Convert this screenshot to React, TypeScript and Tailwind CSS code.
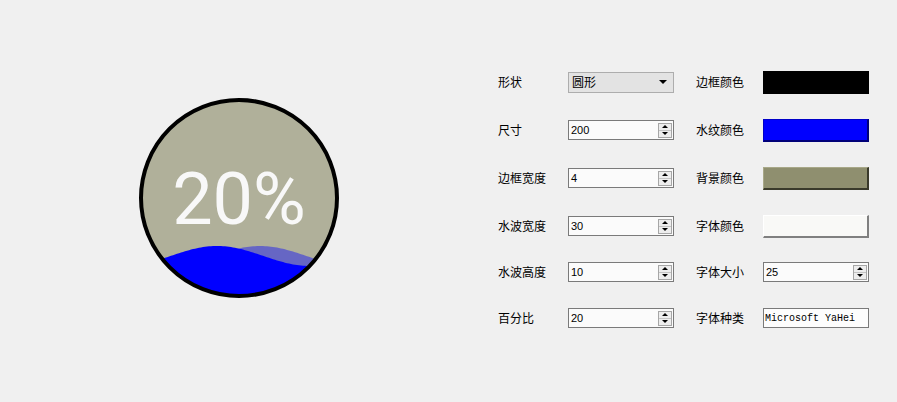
import React from 'react';

const cjk = '"Noto Sans CJK SC", "Noto Sans", sans-serif';

function wavePath(peakX: number, level = 158, amp = 10, lambda = 186) {
  let d = 'M0 200 ';
  for (let x = 0; x <= 200; x += 2) {
    const y = level - amp * Math.cos((2 * Math.PI * (x - peakX)) / lambda);
    d += `L${x} ${y.toFixed(2)} `;
  }
  return d + 'L200 200 Z';
}

function WaterBall() {
  return (
    <svg width="200" height="200" viewBox="0 0 200 200">
      <defs>
        <clipPath id="inner">
          <circle cx="100" cy="100" r="97" />
        </clipPath>
      </defs>
      <circle cx="100" cy="100" r="97" fill="#b0b09a" />
      <g clipPath="url(#inner)">
        <path d={wavePath(121)} fill="#0000ff" fillOpacity="0.42" />
        <path d={wavePath(78)} fill="#0000ff" />
      </g>
      <text
        x="100"
        y="126"
        textAnchor="middle"
        fill="#f8f8f8"
        style={{ fontFamily: 'Roboto, "Noto Sans", sans-serif', fontSize: '72px' }}
      >
        20%
      </text>
      <circle cx="100" cy="100" r="98" fill="none" stroke="#000" strokeWidth="4" />
    </svg>
  );
}

function Label({ text, w }: { text: string; w: string }) {
  return (
    <div className={`${w} shrink-0 text-[12px] text-black leading-none`} style={{ fontFamily: cjk }}>
      {text}
    </div>
  );
}

function SpinBox({ value }: { value: string }) {
  return (
    <div className="w-[106px] h-[20px] border border-[#7a7a7a] bg-[#fbfbfb] flex items-center">
      <span className="pl-[2px] text-[11px] text-black" style={{ fontFamily: '"Liberation Sans", sans-serif' }}>
        {value}
      </span>
      <div className="ml-auto mr-[1px] w-[14px] h-[15px] border border-[#a6a6a6] bg-[#ededed] flex flex-col">
        <div className="flex-1 flex items-center justify-center border-b border-[#c4c4c4]">
          <div className="w-0 h-0 border-x-[3px] border-b-[3px] border-x-transparent border-b-black" />
        </div>
        <div className="flex-1 flex items-center justify-center">
          <div className="w-0 h-0 border-x-[3px] border-t-[3px] border-x-transparent border-t-black" />
        </div>
      </div>
    </div>
  );
}

function Combo({ value }: { value: string }) {
  return (
    <div className="w-[106px] h-[21px] border border-[#adadad] bg-[#e3e3e3] flex items-center">
      <span className="pl-[3px] text-[12px] text-black" style={{ fontFamily: cjk }}>
        {value}
      </span>
      <div className="ml-auto mr-[6px] w-0 h-0 border-x-[4px] border-t-[4px] border-x-transparent border-t-black" />
    </div>
  );
}

function Swatch({ cls }: { cls: string }) {
  return <div className={`w-[106px] h-[23px] ${cls}`} />;
}

function TextBox({ value }: { value: string }) {
  return (
    <div className="w-[106px] h-[20px] border border-[#7a7a7a] bg-[#fdfdfd] flex items-center">
      <span className="pl-[1px] text-[10px] text-black" style={{ fontFamily: '"Liberation Mono", monospace' }}>
        {value}
      </span>
    </div>
  );
}

const rows: { l: string; lc: React.ReactNode; r: string; rc: React.ReactNode; mt: string }[] = [
  { l: '形状', lc: <Combo value="圆形" />, r: '边框颜色', rc: <Swatch cls="bg-black" />, mt: 'mt-0' },
  {
    l: '尺寸',
    lc: <SpinBox value="200" />,
    r: '水纹颜色',
    rc: <Swatch cls="bg-[#0000ff] border border-[#0000c8] border-r-2 border-b-2 border-r-[#000078] border-b-[#000078]" />,
    mt: 'mt-[24px]',
  },
  {
    l: '边框宽度',
    lc: <SpinBox value="4" />,
    r: '背景颜色',
    rc: <Swatch cls="bg-[#8f8f6f] border border-[#a8a888] border-r-2 border-b-2 border-r-[#3a3a2b] border-b-[#3a3a2b]" />,
    mt: 'mt-[24px]',
  },
  {
    l: '水波宽度',
    lc: <SpinBox value="30" />,
    r: '字体颜色',
    rc: <Swatch cls="bg-[#f9f9f7] border border-white border-r-2 border-b-2 border-r-[#808080] border-b-[#808080]" />,
    mt: 'mt-[24px]',
  },
  { l: '水波高度', lc: <SpinBox value="10" />, r: '字体大小', rc: <SpinBox value="25" />, mt: 'mt-[22px]' },
  { l: '百分比', lc: <SpinBox value="20" />, r: '字体种类', rc: <TextBox value="Microsoft YaHei" />, mt: 'mt-[22px]' },
];

export default function App() {
  return (
    <div className="w-[897px] h-[402px] bg-[#f0f0f0] flex items-start overflow-hidden">
      <div className="pl-[139px] pt-[98px] shrink-0">
        <WaterBall />
      </div>
      <div className="ml-[159px] pt-[70px] flex flex-col">
        {rows.map(row => (
          <div key={row.l} className={`${row.mt} h-[24px] flex items-center`}>
            <Label text={row.l} w="w-[70px]" />
            {row.lc}
            <div className="w-[22px] shrink-0" />
            <Label text={row.r} w="w-[67px]" />
            {row.rc}
          </div>
        ))}
      </div>
    </div>
  );
}
